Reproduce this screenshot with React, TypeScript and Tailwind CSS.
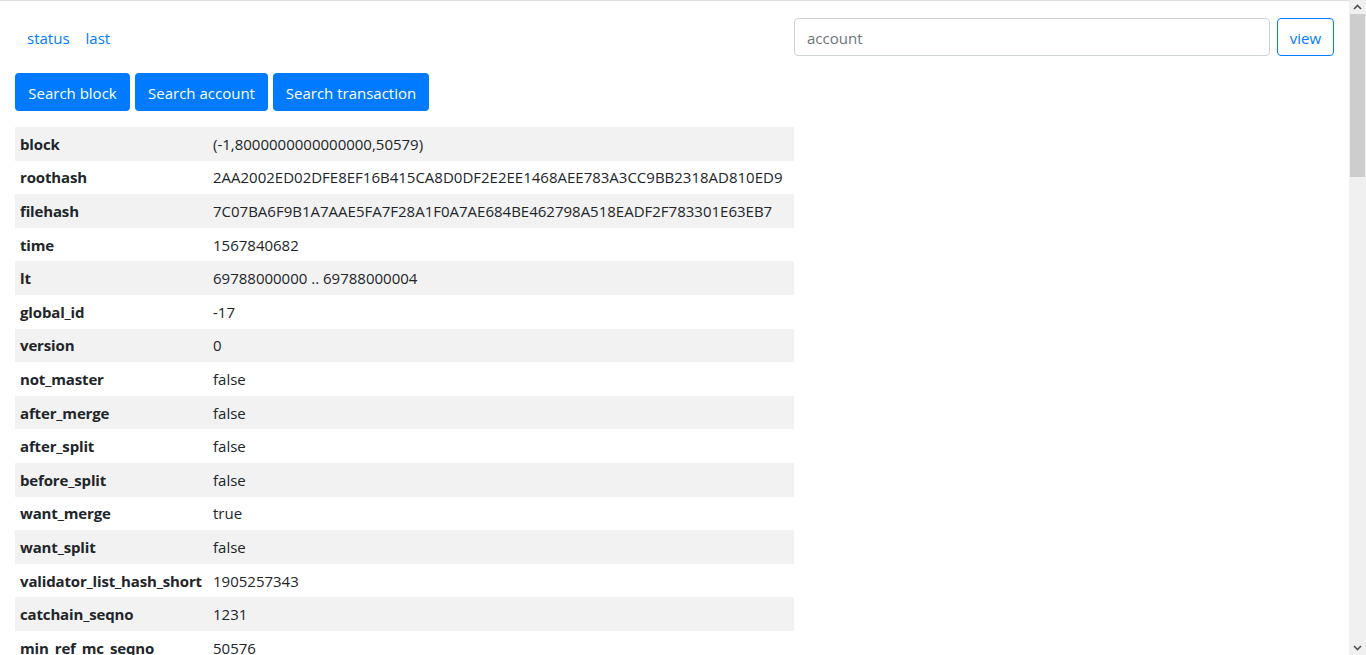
import React from "react";

const font = "font-['Open_Sans','Noto_Sans',sans-serif]";

// block header fields
const rows: [string, string][] = [
  ["block", "(-1,8000000000000000,50579)"],
  ["roothash", "2AA2002ED02DFE8EF16B415CA8D0DF2E2EE1468AEE783A3CC9BB2318AD810ED9"],
  ["filehash", "7C07BA6F9B1A7AAE5FA7F28A1F0A7AE684BE462798A518EADF2F783301E63EB7"],
  ["time", "1567840682"],
  ["lt", "69788000000 .. 69788000004"],
  ["global_id", "-17"],
  ["version", "0"],
  ["not_master", "false"],
  ["after_merge", "false"],
  ["after_split", "false"],
  ["before_split", "false"],
  ["want_merge", "true"],
  ["want_split", "false"],
  ["validator_list_hash_short", "1905257343"],
  ["catchain_seqno", "1231"],
  ["min_ref_mc_seqno", "50576"],
  ["prev_key_block_seqno", "49939"],
  ["vert_seqno", "0"],
  ["gen_utime", "1567840682"],
  ["start_lt", "69788000000"],
  ["end_lt", "69788000004"],
];

const Row = ({ name, value, odd }: { name: string; value: string; odd: boolean }) => (
  <tr className={odd ? "bg-[#f2f2f2]" : ""}>
    <td className="w-[193px] px-[5px] py-[4.8px] font-bold tracking-[-0.15px] whitespace-nowrap">{name}</td>
    <td className="px-[5px] py-[4.8px] whitespace-nowrap">{value}</td>
  </tr>
);

// window scrollbar, drawn over the right edge
const Scrollbar = () => (
  <div className="fixed top-0 right-0 flex h-screen w-[17px] flex-col bg-[#f0f0f0]">
    <div className="flex h-[14px] items-center justify-center">
      <svg width="9" height="6" viewBox="0 0 9 6" fill="none" stroke="#505050" strokeWidth="1.6">
        <path d="M1 5 L4.5 1.5 L8 5" />
      </svg>
    </div>
    <div className="mx-auto h-[163px] w-[15px] bg-[#cdcdcd]" />
    <div className="flex-1" />
    <div className="flex h-[14px] items-center justify-center">
      <svg width="9" height="6" viewBox="0 0 9 6" fill="none" stroke="#505050" strokeWidth="1.6">
        <path d="M1 1 L4.5 4.5 L8 1" />
      </svg>
    </div>
  </div>
);

export default function App() {
  return (
    <div className={`${font} min-h-screen border-t border-[#dedede] bg-white text-[15px] leading-[24px] text-[#212529]`}>
      <div className="mr-[17px] px-[15px]">
        {/* top bar: nav links and lookup form */}
        <div className="mt-[17px] flex items-center justify-between">
          <nav className="flex gap-4 pl-[12px] pt-[2px]">
            <a href="#" className="text-[#007bff]">status</a>
            <a href="#" className="text-[#007bff]">last</a>
          </nav>
          <form className="flex gap-[7px]">
            <input
              type="text"
              placeholder="account"
              className="h-[38px] w-[476px] rounded-[4px] border border-[#ced4da] px-[12px] pt-[2px] placeholder:text-[#6c757d]"
            />
            <button
              type="button"
              className="h-[38px] w-[57px] rounded-[4px] border border-[#007bff] pt-[1px] text-[#007bff]"
            >
              view
            </button>
          </form>
        </div>

        {/* search buttons */}
        <div className="mt-[17px] flex gap-[5px]">
          <button className="h-[38px] w-[115px] rounded-[4px] bg-[#007bff] pt-[1px] text-white">Search block</button>
          <button className="h-[38px] w-[133px] rounded-[4px] bg-[#007bff] pt-[1px] text-white">Search account</button>
          <button className="h-[38px] w-[156px] rounded-[4px] bg-[#007bff] pt-[1px] text-white">Search transaction</button>
        </div>

        {/* block details */}
        <table className="mt-[16px] w-[779px] border-collapse">
          <tbody>
            {rows.map(([k, v], i) => (
              <Row key={k} name={k} value={v} odd={i % 2 === 0} />
            ))}
          </tbody>
        </table>
      </div>
      <Scrollbar />
    </div>
  );
}
